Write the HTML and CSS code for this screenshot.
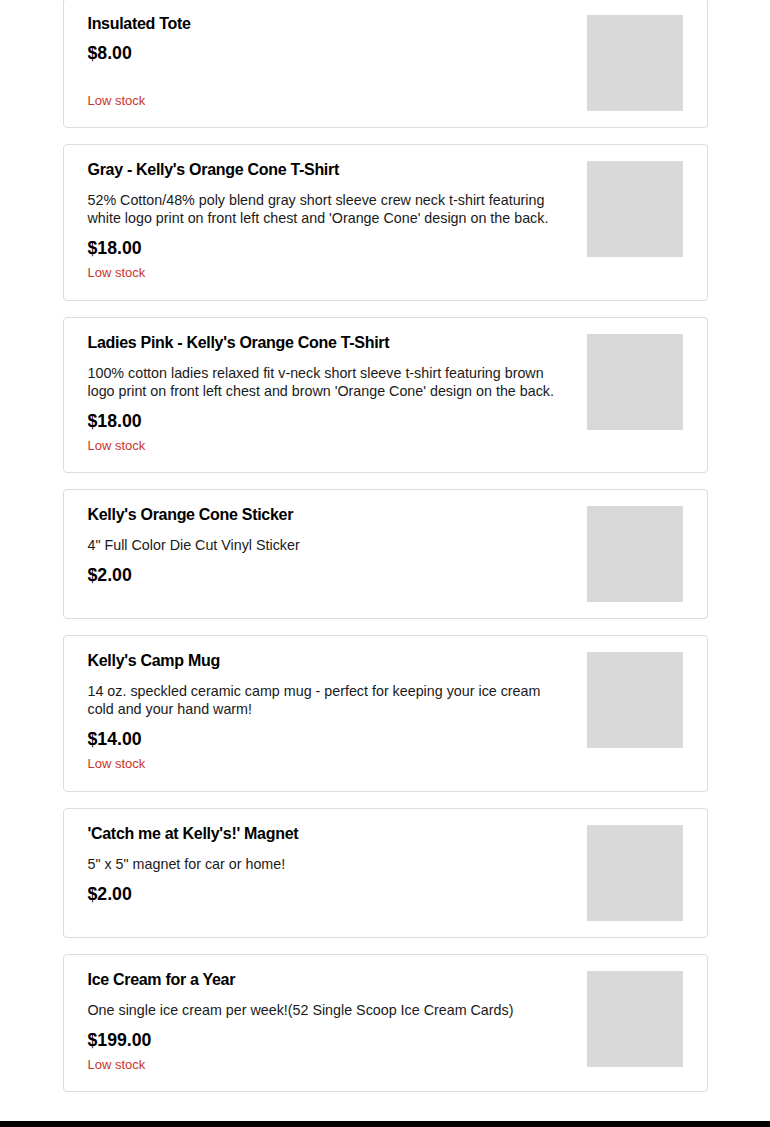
FILE: index.html
```html
<!DOCTYPE html>
<html lang="en">
<head>
<meta charset="utf-8">
<title>Shop</title>
<link rel="stylesheet" href="styles.css">
</head>
<body>
<main class="list">
  <article class="card">
    <div class="info">
      <h3 class="title">Insulated Tote</h3>
      <p class="price">$8.00</p>
      <p class="stock">Low stock</p>
    </div>
    <div class="thumb"></div>
  </article>
  <article class="card">
    <div class="info">
      <h3 class="title">Gray - Kelly's Orange Cone T-Shirt</h3>
      <p class="desc">52% Cotton/48% poly blend gray short sleeve crew neck t-shirt featuring white logo print on front left chest and 'Orange Cone' design on the back.</p>
      <p class="price">$18.00</p>
      <p class="stock">Low stock</p>
    </div>
    <div class="thumb"></div>
  </article>
  <article class="card">
    <div class="info">
      <h3 class="title">Ladies Pink - Kelly's Orange Cone T-Shirt</h3>
      <p class="desc">100% cotton ladies relaxed fit v-neck short sleeve t-shirt featuring brown logo print on front left chest and brown 'Orange Cone' design on the back.</p>
      <p class="price">$18.00</p>
      <p class="stock">Low stock</p>
    </div>
    <div class="thumb"></div>
  </article>
  <article class="card">
    <div class="info">
      <h3 class="title">Kelly's Orange Cone Sticker</h3>
      <p class="desc">4" Full Color Die Cut Vinyl Sticker</p>
      <p class="price">$2.00</p>
    </div>
    <div class="thumb"></div>
  </article>
  <article class="card">
    <div class="info">
      <h3 class="title">Kelly's Camp Mug</h3>
      <p class="desc">14 oz. speckled ceramic camp mug - perfect for keeping your ice cream cold and your hand warm!</p>
      <p class="price">$14.00</p>
      <p class="stock">Low stock</p>
    </div>
    <div class="thumb"></div>
  </article>
  <article class="card">
    <div class="info">
      <h3 class="title">'Catch me at Kelly's!' Magnet</h3>
      <p class="desc">5" x 5" magnet for car or home!</p>
      <p class="price">$2.00</p>
    </div>
    <div class="thumb"></div>
  </article>
  <article class="card">
    <div class="info">
      <h3 class="title">Ice Cream for a Year</h3>
      <p class="desc">One single ice cream per week!(52 Single Scoop Ice Cream Cards)</p>
      <p class="price">$199.00</p>
      <p class="stock">Low stock</p>
    </div>
    <div class="thumb"></div>
  </article>
</main>
<footer class="footer"></footer>
</body>
</html>
```
FILE: styles.css
```css
* { box-sizing: border-box; }
html, body { margin: 0; padding: 0; background: #fff; }
body {
  font-family: "Liberation Sans", Arial, sans-serif;
  color: #111;
}
.list {
  width: 645px;
  margin: -2px auto 0;
  display: flex;
  flex-direction: column;
  gap: 16px;
  padding-bottom: 29px;
}
.card {
  display: flex;
  gap: 30px;
  padding: 16px 24px;
  border: 1px solid #dcdcdc;
  border-radius: 4px;
  background: #fff;
}
.info {
  flex: 1;
  min-width: 0;
  display: flex;
  flex-direction: column;
}
.title {
  margin: 0 0 13px;
  padding-top: 1px;
  font-size: 16px;
  line-height: 16px;
  font-weight: 700;
  color: #000;
  letter-spacing: -0.3px;
}
.desc {
  margin: 0 0 11px;
  font-size: 14.3px;
  line-height: 18px;
  color: #1a1a1a;
}
.price {
  margin: 0 0 5px;
  font-size: 17.7px;
  line-height: 20px;
  font-weight: 700;
  color: #000;
}
.title + .price { margin-top: -2px; }
.stock {
  margin: auto 0 0;
  font-size: 13px;
  line-height: 20.5px;
  color: #c9352c;
}
.thumb {
  flex: none;
  width: 96px;
  height: 96px;
  background: #d9d9d9;
}
.footer {
  height: 40px;
  background: #000;
}
```
